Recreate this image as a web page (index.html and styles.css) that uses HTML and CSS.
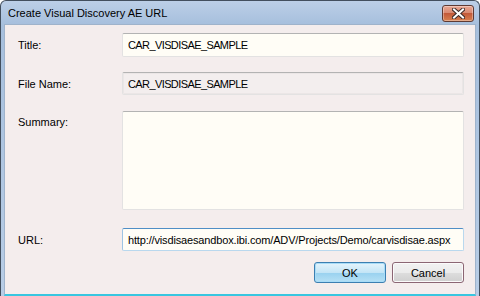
FILE: index.html
```html
<!DOCTYPE html>
<html lang="en">
  <head>
    <meta charset="UTF-8" />
    <title>Create Visual Discovery AE URL</title>
    <link rel="stylesheet" href="styles.css">
  </head>
  <body>
    <div class="window">
      <div class="titlebar">
        <span class="titlebar__text">Create Visual Discovery AE URL</span>
        <button class="close-btn" title="Close">
          <svg width="13" height="11" viewBox="0 0 13 11">
            <path d="M2 1.5 L11 9.5 M11 1.5 L2 9.5" stroke="#3b2a28" stroke-width="4" stroke-linecap="square" />
            <path d="M2 1.5 L11 9.5 M11 1.5 L2 9.5" stroke="#ffffff" stroke-width="2" stroke-linecap="square" />
          </svg>
        </button>
      </div>
      <div class="client">
        <div class="row row--title">
          <label class="row__label" for="title">Title:</label>
          <input class="field field--caps" id="title" type="text" value="CAR_VISDISAE_SAMPLE" />
        </div>
        <div class="row row--file">
          <label class="row__label" for="filename">File Name:</label>
          <input class="field field--caps field--readonly" id="filename" type="text" value="CAR_VISDISAE_SAMPLE" readonly />
        </div>
        <div class="row row--summary">
          <label class="row__label" for="summary">Summary:</label>
          <textarea class="field field--area" id="summary"></textarea>
        </div>
        <div class="row row--url">
          <label class="row__label" for="url">URL:</label>
          <input class="field field--focus" id="url" type="text" value="http://visdisaesandbox.ibi.com/ADV/Projects/Demo/carvisdisae.aspx" />
        </div>
        <div class="buttons">
          <button class="btn btn--default">OK</button>
          <button class="btn btn--cancel">Cancel</button>
        </div>
      </div>
    </div>
  </body>
</html>
```

FILE: styles.css
```css
html,
body {
  margin: 0;
  background: #ffffff;
}
body {
  font-family: "Liberation Sans", Arial, sans-serif;
  font-size: 11px;
  color: #000;
}
.window {
  width: 480px;
  height: 296px;
  box-sizing: border-box;
  border: 1px solid #434f5e;
  border-bottom: none;
  border-radius: 6px 6px 0 0;
  background: linear-gradient(#bccfe7, #a6bfdd 24px, #b8cde6);
  padding: 0 3px 0 3px;
  display: flex;
  flex-direction: column;
}
.titlebar {
  height: 23px;
  display: flex;
  align-items: center;
  justify-content: space-between;
  padding: 0 2px 0 4px;
}
.titlebar__text {
  font-size: 11px;
  color: #000;
  margin-top: 1px;
}
.close-btn {
  width: 32px;
  height: 17px;
  margin-top: 2px;
  border: 1px solid #5e3a33;
  border-radius: 3px;
  background: linear-gradient(#e9a793, #d98a72 45%, #c35a3a 50%, #d8804f);
  padding: 0;
  display: flex;
  align-items: center;
  justify-content: center;
  box-shadow: inset 0 0 0 1px rgba(255, 255, 255, 0.35);
}
.client {
  flex: 1;
  background: #f4eded;
  border: 1px solid #9fb3cb;
  border-bottom: 2px solid #38c6e0;
  padding: 8px 11px 0 13px;
  display: flex;
  flex-direction: column;
}
.row {
  display: flex;
  align-items: center;
}
.row__label {
  width: 104px;
  flex: none;
  font-size: 11px;
}
.field {
  flex: 1;
  height: 24px;
  box-sizing: border-box;
  margin: 0;
  padding: 0 4px 0 5px;
  font-family: inherit;
  font-size: 11px;
  color: #000;
  background: #fffdf6;
  border: 1px solid #e3e2e2;
  border-top-color: #b3b3b3;
  border-radius: 2px;
  outline: none;
}
.field--caps {
  letter-spacing: -0.6px;
}
.row--file {
  margin-top: 15px;
}
.field--readonly {
  height: 23px;
  background: #f3eeee;
  box-shadow: inset 0 0 0 1px #ebe6e6;
}
.row--summary {
  margin-top: 16px;
  align-items: flex-start;
}
.row--summary .row__label {
  padding-top: 5px;
}
.field--area {
  height: 99px;
  resize: none;
}
.row--url {
  margin-top: 18px;
}
.field--focus {
  height: 23px;
  letter-spacing: -0.15px;
  border-color: #b9d8ee;
  border-top-color: #4f8ec6;
  border-left-color: #9ec4e4;
}
.buttons {
  display: flex;
  justify-content: flex-end;
  gap: 6px;
  margin-top: 11px;
}
.btn {
  width: 72px;
  height: 21px;
  padding: 0;
  font-family: inherit;
  font-size: 11px;
  color: #000;
  border-radius: 3px;
  cursor: pointer;
}
.btn--default {
  border: 1px solid #3c7fb1;
  background: linear-gradient(#e5f4fc, #c4e5f6 50%, #98d1ef 51%, #b6e0f5);
  box-shadow: inset 0 0 0 1px #a8dcf7;
}
.btn--cancel {
  border: 1px solid #8b6674;
  background: linear-gradient(#f2f2f2, #ebebeb 50%, #dddddd 51%, #cfcfcf);
  box-shadow: inset 0 0 0 1px #fbfbfb;
}
```
